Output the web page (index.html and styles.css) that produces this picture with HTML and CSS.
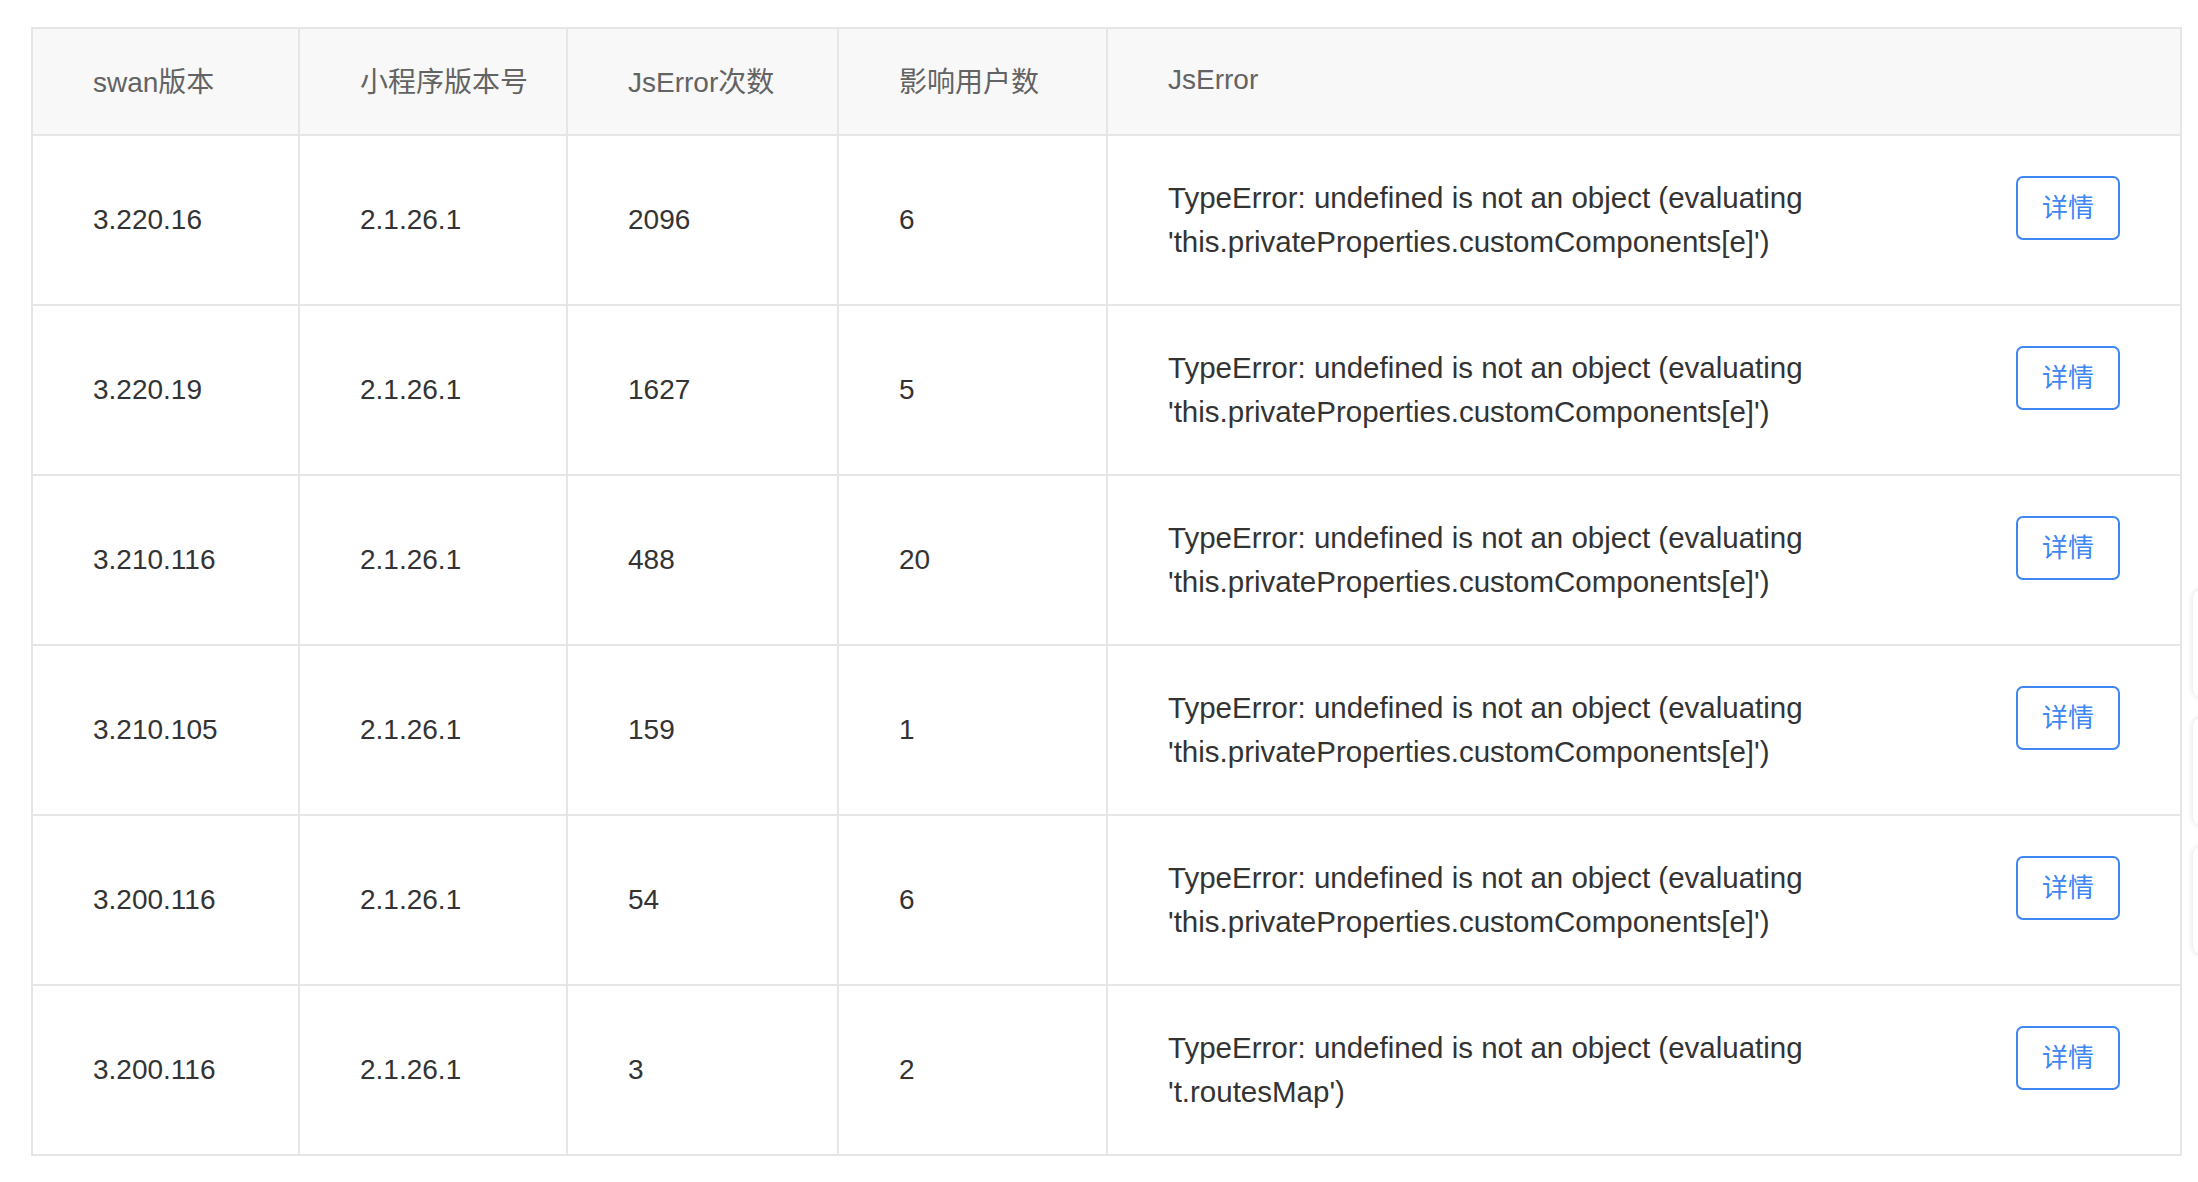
FILE: index.html
```html
<!DOCTYPE html>
<html lang="zh-CN">
<head>
<meta charset="utf-8">
<title>JsError</title>
<link rel="stylesheet" href="styles.css">
</head>
<body>
<div class="page">
  <table class="err-table">
    <colgroup>
      <col class="c1"><col class="c2"><col class="c3"><col class="c4"><col class="c5">
    </colgroup>
    <thead>
      <tr>
        <th>swan版本</th>
        <th>小程序版本号</th>
        <th>JsError次数</th>
        <th>影响用户数</th>
        <th>JsError</th>
      </tr>
    </thead>
    <tbody>
      <tr>
        <td>3.220.16</td><td>2.1.26.1</td><td>2096</td><td>6</td>
        <td><div class="err"><span class="err-text">TypeError: undefined is not an object (evaluating 'this.privateProperties.customComponents[e]')</span><button class="btn">详情</button></div></td>
      </tr>
      <tr>
        <td>3.220.19</td><td>2.1.26.1</td><td>1627</td><td>5</td>
        <td><div class="err"><span class="err-text">TypeError: undefined is not an object (evaluating 'this.privateProperties.customComponents[e]')</span><button class="btn">详情</button></div></td>
      </tr>
      <tr>
        <td>3.210.116</td><td>2.1.26.1</td><td>488</td><td>20</td>
        <td><div class="err"><span class="err-text">TypeError: undefined is not an object (evaluating 'this.privateProperties.customComponents[e]')</span><button class="btn">详情</button></div></td>
      </tr>
      <tr>
        <td>3.210.105</td><td>2.1.26.1</td><td>159</td><td>1</td>
        <td><div class="err"><span class="err-text">TypeError: undefined is not an object (evaluating 'this.privateProperties.customComponents[e]')</span><button class="btn">详情</button></div></td>
      </tr>
      <tr>
        <td>3.200.116</td><td>2.1.26.1</td><td>54</td><td>6</td>
        <td><div class="err"><span class="err-text">TypeError: undefined is not an object (evaluating 'this.privateProperties.customComponents[e]')</span><button class="btn">详情</button></div></td>
      </tr>
      <tr>
        <td>3.200.116</td><td>2.1.26.1</td><td>3</td><td>2</td>
        <td><div class="err"><span class="err-text">TypeError: undefined is not an object (evaluating 't.routesMap')</span><button class="btn">详情</button></div></td>
      </tr>
    </tbody>
  </table>
  <div class="side-card card-a"></div>
  <div class="side-card card-b"></div>
  <div class="side-card card-c"></div>
</div>
</body>
</html>
```
FILE: styles.css
```css
html, body {
  margin: 0;
  padding: 0;
  background: #ffffff;
}
body {
  font-family: "Liberation Sans", Arial, "Noto Sans CJK SC", sans-serif;
  color: #333333;
  overflow: hidden;
}
.page {
  position: relative;
  width: 2198px;
  height: 1182px;
  padding: 27px 0 0 31px;
  box-sizing: border-box;
}
.err-table {
  border-collapse: collapse;
  table-layout: fixed;
  width: 2151px;
  border: 2px solid #e4e4e4;
}
.c1 { width: 267px; }
.c2 { width: 268px; }
.c3 { width: 271px; }
.c4 { width: 269px; }
.c5 { width: auto; }
.err-table th,
.err-table td {
  border: 2px solid #e6e6e6;
  text-align: left;
  vertical-align: middle;
  padding: 0 60px 0 60px;
  font-size: 28px;
}
.err-table th {
  height: 101px;
  padding-bottom: 4px;
  background: #f8f8f8;
  color: #636363;
  font-weight: normal;
  white-space: nowrap;
  overflow: visible;
}
.err-table td {
  height: 168px;
  color: #333333;
}
.err {
  display: flex;
  justify-content: space-between;
  align-items: flex-start;
}
.err-text {
  display: block;
  max-width: 690px;
  font-size: 29.5px;
  line-height: 44px;
  color: #333333;
}
.btn {
  flex: none;
  width: 104px;
  height: 64px;
  margin-top: 0;
  border: 2px solid #3d86f3;
  border-radius: 7px;
  background: #ffffff;
  color: #3d86f3;
  font-size: 26px;
  line-height: 56px;
  font-family: "Noto Sans CJK SC", sans-serif;
  padding: 0 0 4px 0;
}
.side-card {
  position: absolute;
  left: 2193px;
  width: 40px;
  height: 107px;
  background: #ffffff;
  border-radius: 8px;
  box-shadow: 0 0 6px rgba(0, 0, 0, 0.14);
}
.card-a { top: 590px; }
.card-b { top: 718px; }
.card-c { top: 847px; }
```
